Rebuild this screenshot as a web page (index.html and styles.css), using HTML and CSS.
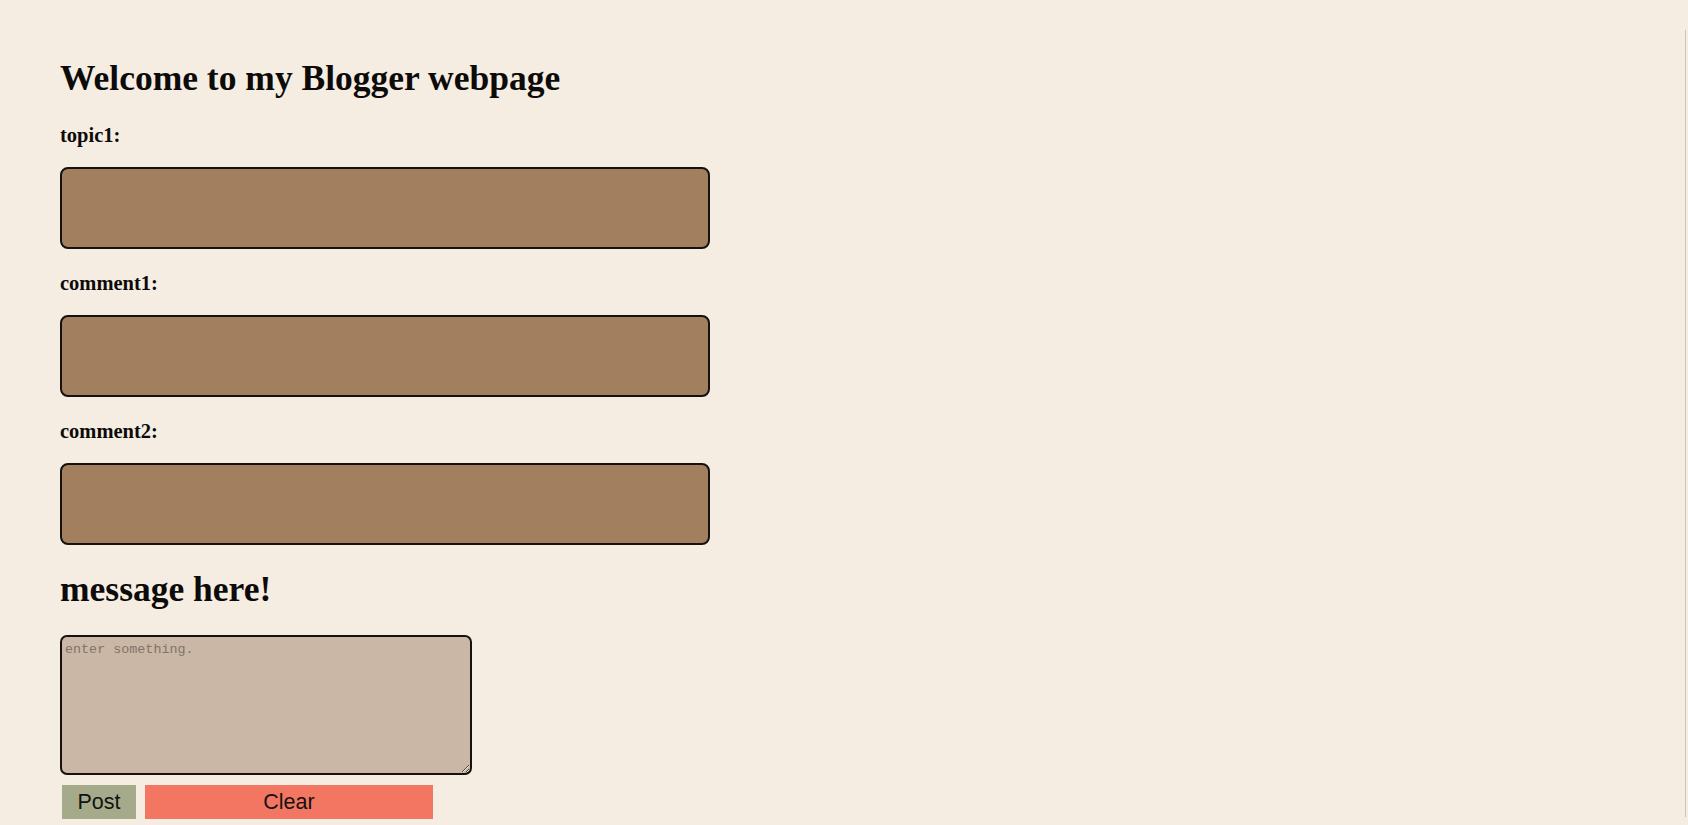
FILE: index.html
```html
<!DOCTYPE html>
<html lang="en">
<head>
<meta charset="utf-8">
<title>Blogger</title>
<link rel="stylesheet" href="styles.css">
</head>
<body>
<main class="page">
  <h1 class="title">Welcome to my Blogger webpage</h1>
  <form class="blog-form">
    <div class="field">
      <label class="field-label" for="topic1">topic1:</label>
      <input class="field-input" id="topic1" type="text">
    </div>
    <div class="field">
      <label class="field-label" for="comment1">comment1:</label>
      <input class="field-input" id="comment1" type="text">
    </div>
    <div class="field">
      <label class="field-label" for="comment2">comment2:</label>
      <input class="field-input" id="comment2" type="text">
    </div>
  </form>
  <h2 class="message-title">message here!</h2>
  <textarea class="message" placeholder="enter something."></textarea>
  <div class="actions">
    <button class="btn btn-post" type="button">Post</button>
    <button class="btn btn-clear" type="button">Clear</button>
  </div>
</main>
<div class="scroll-edge"></div>
</body>
</html>
```

FILE: styles.css
```css
html, body {
  margin: 0;
  padding: 0;
  background: #f6ede2;
}

body {
  font-family: "Liberation Serif", "Times New Roman", serif;
  color: #0d0b0a;
  height: 825px;
  overflow: hidden;
}

.page {
  display: flex;
  flex-direction: column;
  align-items: flex-start;
  padding: 58px 0 0 60px;
}

.title {
  margin: 0;
  font-size: 35.5px;
  line-height: 40px;
  font-weight: bold;
}

.blog-form {
  display: flex;
  flex-direction: column;
  gap: 22px;
  margin-top: 25px;
}

.field {
  display: flex;
  flex-direction: column;
  align-items: flex-start;
  gap: 20px;
}

.field-label {
  font-size: 20.5px;
  line-height: 24px;
  font-weight: bold;
}

.field-input {
  box-sizing: border-box;
  width: 650px;
  height: 82px;
  margin: 0;
  border: 2px solid #141110;
  border-radius: 8px;
  background: #a17f5f;
  outline: none;
}

.message-title {
  margin: 24px 0 0;
  font-size: 35.5px;
  line-height: 40px;
  font-weight: bold;
}

.message {
  box-sizing: border-box;
  width: 412px;
  height: 140px;
  margin: 26px 0 0;
  padding: 5px 3px 2px;
  border: 2px solid #141110;
  border-radius: 7px;
  background: #cbb7a5;
  font-family: "Liberation Mono", "DejaVu Sans Mono", monospace;
  font-size: 13.4px;
  line-height: 15px;
  color: #333;
  outline: none;
}

.message::placeholder {
  color: #7f7469;
}

.actions {
  display: flex;
  gap: 9px;
  margin-top: 10px;
  padding-left: 2px;
}

.btn {
  display: flex;
  align-items: center;
  justify-content: center;
  height: 34px;
  margin: 0;
  padding: 0;
  border: none;
  font-family: "Liberation Sans", Arial, sans-serif;
  font-size: 21.5px;
  color: #141210;
}

.btn-post {
  width: 74px;
  background: #a5ab8a;
}

.btn-clear {
  width: 288px;
  background: #f37663;
}

.scroll-edge {
  position: fixed;
  top: 30px;
  bottom: 8px;
  right: 2px;
  width: 1px;
  background: #cbc6c1;
}
```
